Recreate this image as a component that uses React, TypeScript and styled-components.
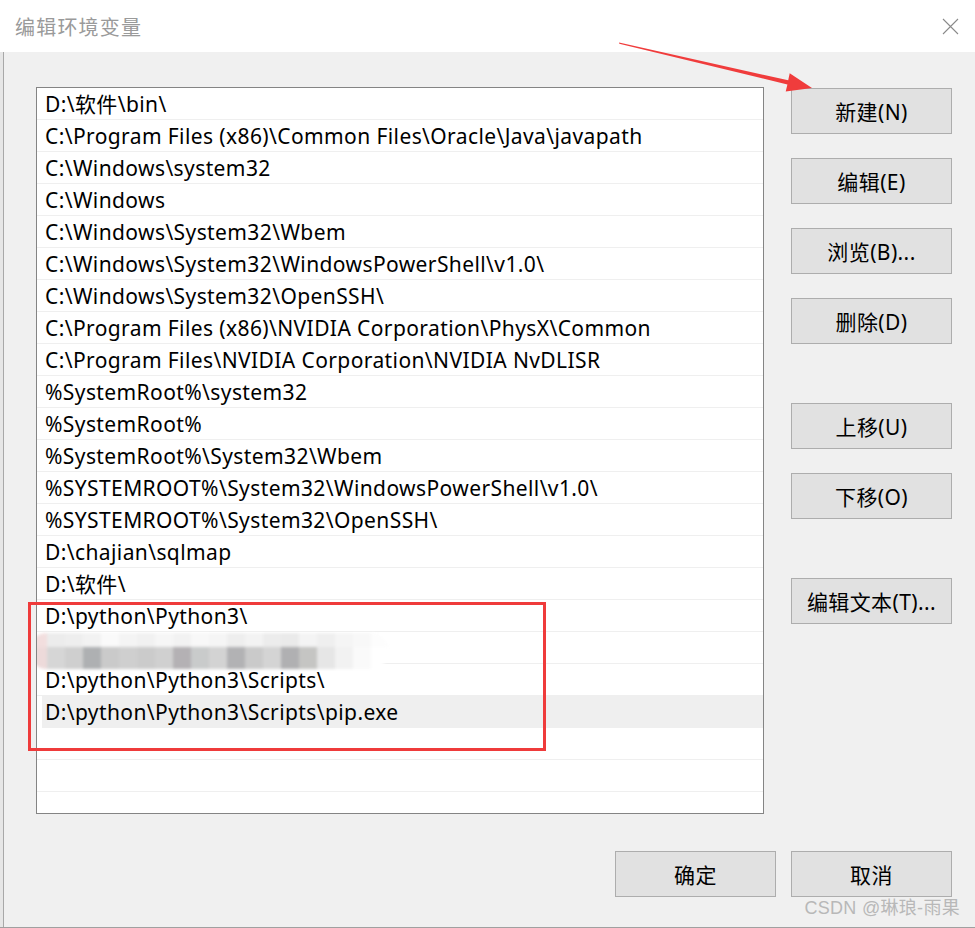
import React from 'react';
import styled, {createGlobalStyle} from 'styled-components';

const GlobalStyle = createGlobalStyle`
  html, body {
    margin: 0;
    padding: 0;
    background: #e6e6e6;
  }
  body {
    font-family: "Noto Sans", "Noto Sans CJK SC", sans-serif;
    color: #000;
  }
`;

const Window = styled.div`
  position: relative;
  width: 975px;
  height: 928px;
  display: flex;
  flex-direction: column;
  overflow: hidden;
  box-sizing: border-box;
  border-bottom: 1px solid #a0a0a0;
`;

const TitleBar = styled.div`
  height: 52px;
  flex: none;
  background: #fff;
  display: flex;
  align-items: center;
  justify-content: space-between;
  padding: 0 16px 0 15px;
`;

const Title = styled.div`
  font-family: "Noto Sans CJK SC", sans-serif;
  font-size: 20px;
  color: #9a9a9a;
  letter-spacing: 1.2px;
`;

const Close = styled.svg`
  width: 17px;
  height: 17px;
`;

const Body = styled.div`
  flex: 1;
  margin-left: 3px;
  border-left: 1px solid #a8a8a8;
  background: #f0f0f0;
  display: flex;
  flex-direction: column;
  padding: 35px 23px 0 32px;
`;

const Main = styled.div`
  display: flex;
  gap: 27px;
`;

const ListBox = styled.div`
  width: 728px;
  height: 727px;
  box-sizing: border-box;
  border: 1px solid #848484;
  background: #fff;
  overflow: hidden;
`;

const Row = styled.div<{$selected?: boolean}>`
  height: 32px;
  box-sizing: border-box;
  border-bottom: 1px solid #efefef;
  margin-left: ${p => (p.$selected ? '5px' : '0')};
  padding-left: ${p => (p.$selected ? '3px' : '8px')};
  padding-top: 2px;
  background: ${p => (p.$selected ? '#efefef' : '#fff')};
  display: flex;
  align-items: center;
  font-size: 21px;
  letter-spacing: 0.4px;
  white-space: nowrap;
  line-height: 1;
`;

const Mosaic = styled.div`
  display: grid;
  grid-template-columns: repeat(20, 18px);
  grid-template-rows: 14px 22px;
  margin-left: -16px;
  margin-top: 4px;
  filter: blur(1.8px);
  border-radius: 18px;
  overflow: hidden;
`;

const Tile = styled.span<{$c: string}>`
  background: ${p => p.$c};
`;

const Buttons = styled.div`
  display: flex;
  flex-direction: column;
  width: 161px;
  padding-top: 1px;
`;

const Button = styled.button<{$space?: number}>`
  width: 161px;
  height: 46px;
  margin-top: ${p => p.$space ?? 0}px;
  box-sizing: border-box;
  border: 1px solid #adadad;
  background: #e1e1e1;
  font-family: "Noto Sans", "Noto Sans CJK SC", sans-serif;
  font-size: 21px;
  letter-spacing: 0.4px;
  color: #000;
  padding: 0;
  cursor: default;
`;

const Footer = styled.div`
  display: flex;
  justify-content: flex-end;
  gap: 15px;
  margin-top: 37px;
`;

const Highlight = styled.div`
  position: absolute;
  left: 28px;
  top: 602px;
  width: 518px;
  height: 149px;
  box-sizing: border-box;
  border: 3px solid #ef3b3b;
  pointer-events: none;
`;

const Overlay = styled.svg`
  position: absolute;
  left: 0;
  top: 0;
  pointer-events: none;
`;

const Watermark = styled.div`
  position: absolute;
  right: 15px;
  bottom: 8px;
  font-family: "Liberation Sans", "Noto Sans CJK SC", sans-serif;
  font-size: 18px;
  letter-spacing: 0.3px;
  color: #b8b8b8;
`;

const paths = [
  'D:\\软件\\bin\\',
  'C:\\Program Files (x86)\\Common Files\\Oracle\\Java\\javapath',
  'C:\\Windows\\system32',
  'C:\\Windows',
  'C:\\Windows\\System32\\Wbem',
  'C:\\Windows\\System32\\WindowsPowerShell\\v1.0\\',
  'C:\\Windows\\System32\\OpenSSH\\',
  'C:\\Program Files (x86)\\NVIDIA Corporation\\PhysX\\Common',
  'C:\\Program Files\\NVIDIA Corporation\\NVIDIA NvDLISR',
  '%SystemRoot%\\system32',
  '%SystemRoot%',
  '%SystemRoot%\\System32\\Wbem',
  '%SYSTEMROOT%\\System32\\WindowsPowerShell\\v1.0\\',
  '%SYSTEMROOT%\\System32\\OpenSSH\\',
  'D:\\chajian\\sqlmap',
  'D:\\软件\\',
  'D:\\python\\Python3\\',
  '*blur*',
  'D:\\python\\Python3\\Scripts\\',
  'D:\\python\\Python3\\Scripts\\pip.exe',
  '',
  '',
  '',
];

const topTiles = ['#f2dede', '#ececec', '#eeeeee', '#f2f2f2', '#fafafa', '#f4f4f4', '#f1f1f1', '#f6f6f6', '#f2f2f2', '#f8f8f8', '#f5f5f5', '#eeeeee', '#f3f3f3', '#ececec', '#eaeaea', '#f4f4f4', '#efefef', '#f5f5f5', '#f8f8f8', '#fdfdfd'];
const bottomTiles = ['#eddada', '#d6d6d6', '#cfcfcf', '#aeb0b2', '#cacaca', '#cfcfcf', '#cbcbcb', '#d0d0d0', '#b4b1b4', '#c9cbcb', '#d3d3d3', '#b2b2b4', '#cacaca', '#d4d4d4', '#b0b0b2', '#c5c5c3', '#e6e6e6', '#f2f2f2', '#fafafa', '#ffffff'];

const buttons: Array<[string, number]> = [
  ['新建(N)', 0],
  ['编辑(E)', 24],
  ['浏览(B)...', 24],
  ['删除(D)', 24],
  ['上移(U)', 59],
  ['下移(O)', 24],
  ['编辑文本(T)...', 59],
];

export default function App() {
  return (
    <>
      <GlobalStyle />
      <Window>
        <TitleBar>
          <Title>编辑环境变量</Title>
          <Close viewBox="0 0 17 17">
            <path d="M1 1 L16 16 M16 1 L1 16" stroke="#8a8a8a" strokeWidth="1.1" fill="none" />
          </Close>
        </TitleBar>
        <Body>
          <Main>
            <ListBox>
              {paths.map((p, i) =>
                p === '*blur*' ? (
                  <Row key={i}>
                    <Mosaic>
                      {topTiles.map((c, j) => <Tile key={'t' + j} $c={c} />)}
                      {bottomTiles.map((c, j) => <Tile key={'b' + j} $c={c} />)}
                    </Mosaic>
                  </Row>
                ) : (
                  <Row key={i} $selected={i === 19}>{p}</Row>
                ),
              )}
            </ListBox>
            <Buttons>
              {buttons.map(([label, space]) => (
                <Button key={label} $space={space}>{label}</Button>
              ))}
            </Buttons>
          </Main>
          <Footer>
            <Button>确定</Button>
            <Button>取消</Button>
          </Footer>
        </Body>
        <Highlight />
        <Overlay width="975" height="928" viewBox="0 0 975 928">
          <polygon
            points="619,42.5 619.3,43.8 787.4,84.4 785.7,91.5 812,88 789.7,73.3 788.2,80.3"
            fill="#f03c3c"
          />
        </Overlay>
        <Watermark>CSDN @琳琅-雨果</Watermark>
      </Window>
    </>
  );
}
